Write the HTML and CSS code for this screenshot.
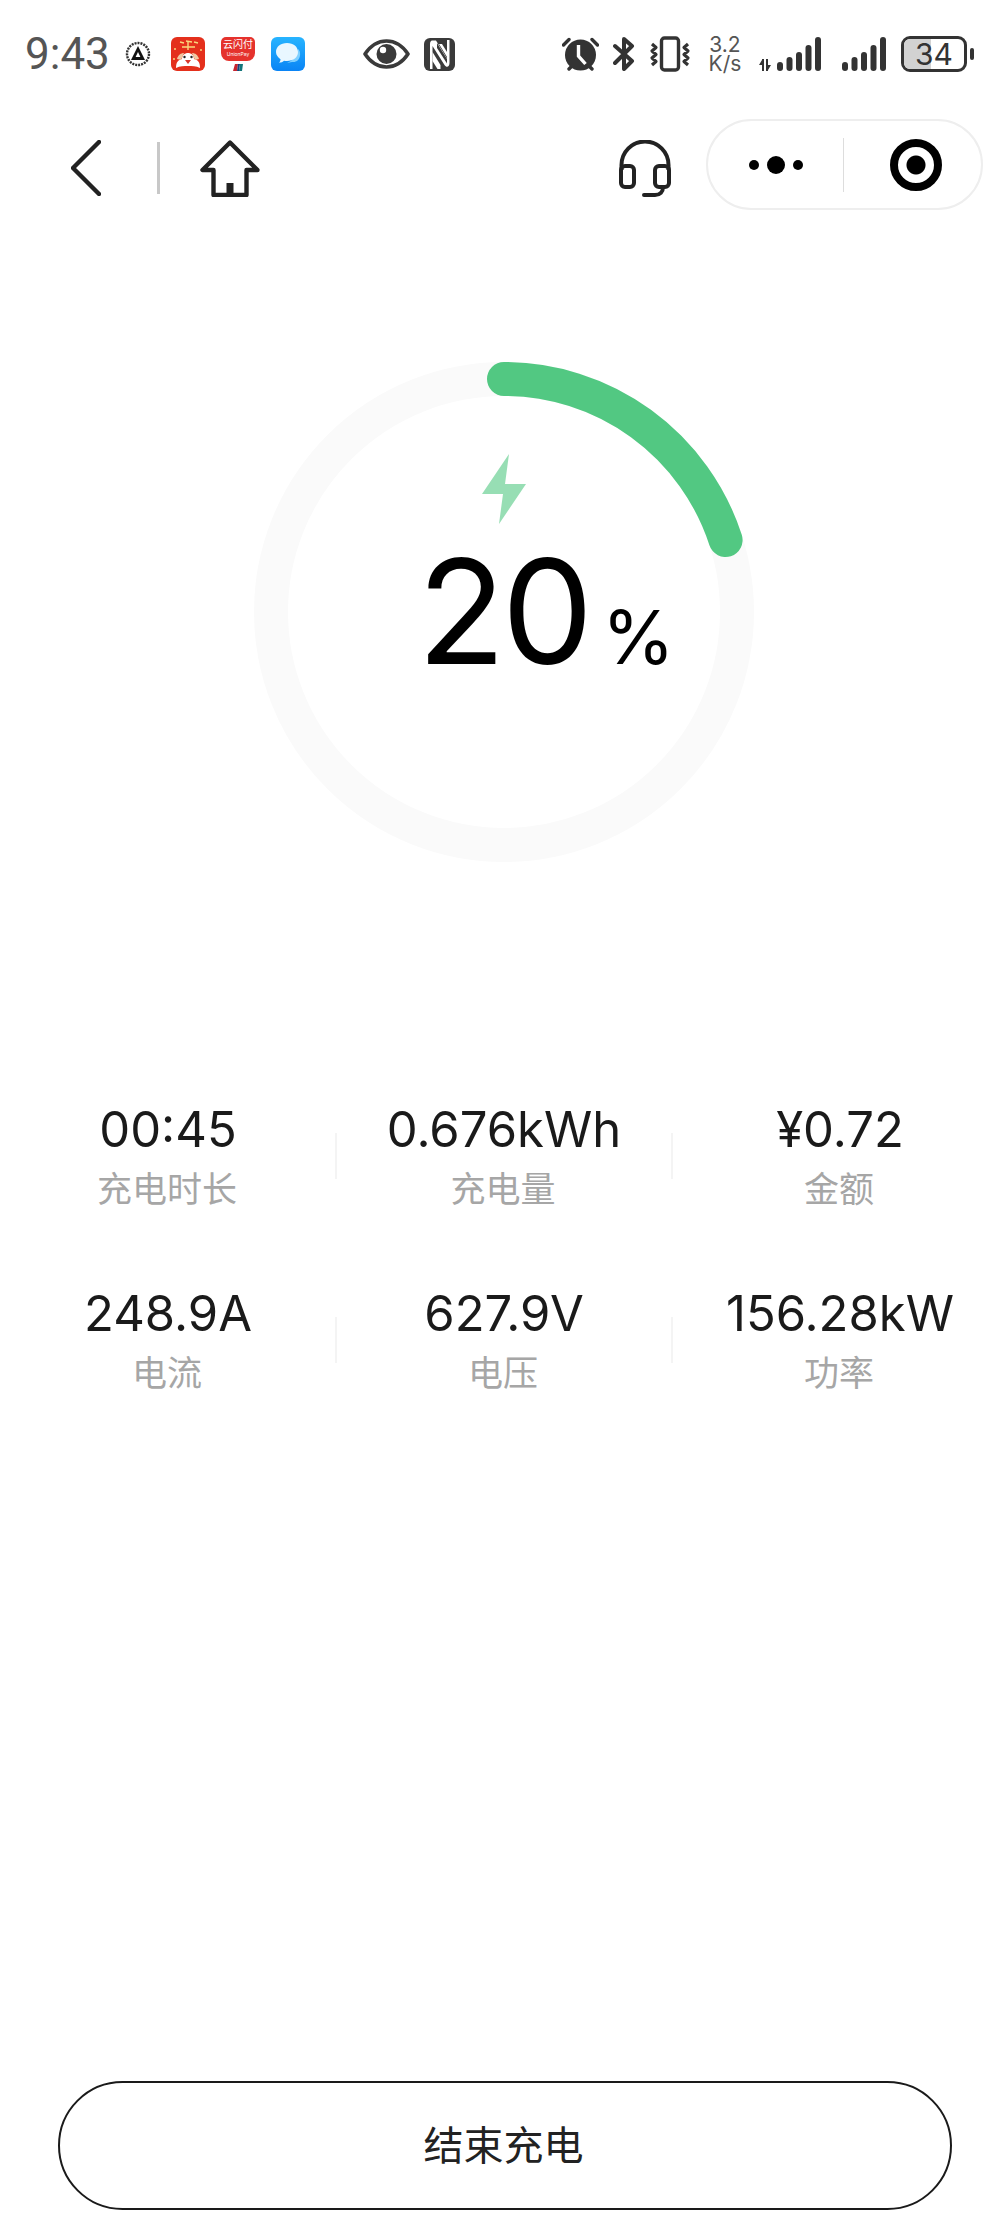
FILE: index.html
```html
<!DOCTYPE html>
<html lang="zh-CN">
<head>
    <meta charset="UTF-8">
    <meta name="viewport" content="width=device-width, initial-scale=1.0">
    <title>充电中</title>
    <link rel="stylesheet" href="styles.css">
</head>
<body>
    <div class="page">
        <!-- status bar -->
        <div class="status-bar">
            <span class="clock">9:43</span>
            <svg class="st-logo" width="26" height="26" viewBox="0 0 26 26">
                <circle cx="13" cy="13" r="11" fill="none" stroke="#333" stroke-width="2.4" stroke-dasharray="2 1"/>
                <circle cx="13" cy="13" r="7.5" fill="#fff"/>
                <path d="M13 5L20 19H6z" fill="#111"/>
                <path d="M13 11l2.4 5h-4.8z" fill="#fff"/>
            </svg>
            <svg class="st-app1" width="34" height="34" viewBox="0 0 34 34">
                <rect width="34" height="34" rx="6" fill="#e4301c"/>
                <path d="M9 5l4 1M15 4l6 1M23 5l4 1M11 10h13M17 4v9" stroke="#f9d77e" stroke-width="1.4" fill="none"/>
                <circle cx="4" cy="12" r="1" fill="#f9d77e"/><circle cx="30" cy="13" r="1" fill="#f9d77e"/><circle cx="3" cy="22" r="1" fill="#f9d77e"/>
                <path d="M5 31c0-6 2-8 6-9 0-4 3-6 6-6s6 2 6 6c4 1 6 3 6 9-4-2-8-2-12-2s-8 0-12 2z" fill="#fff"/>
                <path d="M6 22c1-4 4-6 7-6l-3 7zM28 22c-1-4-4-6-7-6l3 7z" fill="#f0c7a2"/>
                <circle cx="13.500" cy="20" r="1.200" fill="#222"/><circle cx="20.500" cy="20" r="1.200" fill="#222"/>
                <path d="M14 23h6l-3 4z" fill="#d9362a"/>
            </svg>
            <div class="st-app2">
                <div class="pay-card"><span class="pay-name">云闪付</span><span class="pay-en">UnionPay</span></div>
                <svg class="pay-flag" width="10" height="7" viewBox="0 0 10 7"><path d="M2 0h3L4 7H0z" fill="#c8242f"/><path d="M5 0h2L6 7H4z" fill="#1a3f7a"/><path d="M7 0h3L9 7H6z" fill="#12757a"/></svg>
            </div>
            <svg class="st-app3" width="34" height="34" viewBox="0 0 34 34">
                <defs><linearGradient id="chatBg" x1="0" y1="0" x2="0" y2="1"><stop offset="0" stop-color="#27b4ff"/><stop offset="1" stop-color="#0a84f5"/></linearGradient></defs>
                <rect width="34" height="34" rx="6" fill="url(#chatBg)"/>
                <path d="M27 12c3 2 3 9-1 12-2 1-3 1-5 1l-5 1c5-2 11-7 11-14z" fill="#7fd0ff"/>
                <path d="M16 6c6.500 0 11 3.800 11 9s-4.500 9-11 9c-1 0-2 0-3-.3-1 1.200-3 2-5 2 1-1 1.500-2.200 1.500-3.500C7 20.500 5 18 5 15c0-5.200 4.500-9 11-9z" fill="#e9f7ff"/>
            </svg>
            <svg class="st-eye" width="47" height="32" viewBox="0 0 47 32">
                <path d="M2 16C8 7 15 3 23.500 3S39 7 45 16c-6 9-13.500 13-21.500 13S8 25 2 16z" fill="none" stroke="#3a3a3a" stroke-width="3.600" stroke-linejoin="round"/>
                <circle cx="23.500" cy="16" r="10" fill="#3a3a3a"/>
                <circle cx="20" cy="12" r="3.200" fill="#fff"/>
            </svg>
            <svg class="st-nfc" width="31" height="33" viewBox="0 0 31 33">
                <rect width="31" height="33" rx="6" fill="#3a3a3a"/>
                <path d="M8 2.500h4l11 18V2h2.500v23c0 4-3 5-5 2L8.500 8v23H6V6c0-2 1-3.500 2-3.500z" fill="#fff"/>
                <path d="M13 5l10 16v4.500L13 10z" fill="#3a3a3a"/>
                <path d="M15 6h3l5 8v5zM8.500 14l8 13v4h-3l-5-8z" fill="#fff"/>
            </svg>

            <svg class="st-alarm" width="37" height="34" viewBox="0 0 37 34">
                <path d="M1.500 8L7 2.500M35.500 8L30 2.500M7 32l3-3M30 32l-3-3" stroke="#333" stroke-width="3.400" stroke-linecap="round"/>
                <circle cx="18.500" cy="18" r="15.500" fill="#333"/>
                <path d="M16.500 8v11l7 8" fill="none" stroke="#fff" stroke-width="3.400"/>
            </svg>
            <svg class="st-bt" width="22" height="34" viewBox="0 0 22 34">
                <path d="M2 9l17 15-8 8V2l8 7L2 26" fill="none" stroke="#333" stroke-width="4" stroke-linejoin="round" stroke-linecap="round"/>
            </svg>
            <svg class="st-vib" width="42" height="36" viewBox="0 0 42 36">
                <rect x="12.500" y="2" width="17" height="32" rx="3" fill="none" stroke="#333" stroke-width="3.400"/>
                <path d="M3 8l4 3.500-4 3.500 4 3.500-4 3.500 4 3.500-4 3.500M39 8l-4 3.500 4 3.500-4 3.500 4 3.500-4 3.500 4 3.500" fill="none" stroke="#333" stroke-width="3.200" stroke-linejoin="round"/>
            </svg>
            <div class="speed"><span>3.2</span><span>K/s</span></div>
            <svg class="st-sig1" width="62" height="34" viewBox="0 0 62 34">
                <path d="M0 28l3-5v-1h2v12H3v-6zM7 22h2v6h3l-3 5v1H7z" fill="#333"/>
                <rect x="18" y="25" width="6" height="9" rx="3" fill="#333"/>
                <rect x="27.500" y="20" width="6" height="14" rx="3" fill="#333"/>
                <rect x="37" y="15" width="6" height="19" rx="3" fill="#333"/>
                <rect x="46.500" y="8" width="6" height="26" rx="3" fill="#333"/>
                <rect x="56" y="0" width="6" height="34" rx="3" fill="#333"/>
            </svg>
            <svg class="st-sig2" width="44" height="34" viewBox="0 0 44 34">
                <rect x="0" y="25" width="6" height="9" rx="3" fill="#333"/>
                <rect x="9.500" y="20" width="6" height="14" rx="3" fill="#333"/>
                <rect x="19" y="15" width="6" height="19" rx="3" fill="#333"/>
                <rect x="28.500" y="8" width="6" height="26" rx="3" fill="#333"/>
                <rect x="38" y="0" width="6" height="34" rx="3" fill="#333"/>
            </svg>
            <div class="battery">
                <div class="battery-body">
                    <div class="battery-fill"></div>
                    <span class="battery-num">34</span>
                </div>
                <div class="battery-nub"></div>
            </div>
        </div>

        <!-- mini program nav -->
        <div class="nav">
            <svg class="nav-back" width="30" height="56" viewBox="0 0 30 56">
                <path d="M28 2L2 28l26 26" fill="none" stroke="#222" stroke-width="4.400" stroke-linecap="round" stroke-linejoin="round"/>
            </svg>
            <div class="nav-line"></div>
            <svg class="nav-home" width="60" height="57" viewBox="0 0 60 57">
                <path d="M30 2.500L2.500 30h11v25h33V30h11z" fill="none" stroke="#222" stroke-width="4.400" stroke-linejoin="round"/>
                <rect x="26.500" y="43" width="7" height="12" fill="#222"/>
            </svg>
            <svg class="nav-help" width="52" height="57" viewBox="0 0 52 57">
                <path d="M2.500 30V25a23.500 23.500 0 0 1 47 0v5" fill="none" stroke="#222" stroke-width="4"/>
                <rect x="2" y="26" width="13" height="21" rx="4" fill="none" stroke="#222" stroke-width="4"/>
                <rect x="36" y="26" width="14" height="21" rx="4" fill="none" stroke="#222" stroke-width="4"/>
                <path d="M44 47c0 5-3 8-8 8H25" fill="none" stroke="#222" stroke-width="4" stroke-linecap="round"/>
            </svg>
            <div class="capsule">
                <div class="capsule-more"><i class="dot"></i><i class="dot big"></i><i class="dot"></i></div>
                <div class="capsule-line"></div>
                <div class="capsule-close"><i class="target"></i></div>
            </div>
        </div>

        <!-- progress ring -->
        <div class="ring">
            <svg class="ring-svg" width="500" height="500" viewBox="0 0 500 500">
                <circle cx="250" cy="250" r="233" fill="none" stroke="#fafafa" stroke-width="34"/>
                <path d="M250 17A233 233 0 0 1 471.600 178" fill="none" stroke="#52c882" stroke-width="34" stroke-linecap="round"/>
            </svg>
            <div class="ring-inner">
                <svg class="bolt" width="44" height="70" viewBox="0 0 44 70">
                    <path d="M27 0L0 40h21l-4 30 27-40H23z" fill="#52c882" opacity="0.6"/>
                </svg>
                <div class="percent"><span class="percent-num">20</span><span class="percent-sign">%</span></div>
            </div>
        </div>

        <!-- charge data -->
        <div class="stats">
            <div class="stat"><div class="stat-value">00:45</div><div class="stat-label">充电时长</div></div>
            <div class="stat"><div class="stat-value">0.676kWh</div><div class="stat-label">充电量</div></div>
            <div class="stat"><div class="stat-value">¥0.72</div><div class="stat-label">金额</div></div>
            <div class="stat"><div class="stat-value">248.9A</div><div class="stat-label">电流</div></div>
            <div class="stat"><div class="stat-value">627.9V</div><div class="stat-label">电压</div></div>
            <div class="stat"><div class="stat-value">156.28kW</div><div class="stat-label">功率</div></div>
        </div>

        <button class="stop-btn">结束充电</button>
    </div>
</body>
</html>
```

FILE: styles.css
```css
* {
    margin: 0;
    padding: 0;
    box-sizing: border-box;
}

body {
    background: #fff;
    font-family: Inter, "Noto Sans CJK SC", sans-serif;
    color: #111;
}

.page {
    width: 1008px;
    height: 2232px;
    display: flex;
    flex-direction: column;
    overflow: hidden;
}

/* status bar */
.status-bar {
    height: 108px;
    padding-left: 25px;
    display: flex;
    align-items: center;
}

.clock {
    width: 84px;
    font-family: Roboto, sans-serif;
    font-size: 44px;
    line-height: 1;
    color: #555;
}

.st-logo { margin-left: 16px; }
.st-app1 { margin-left: 20px; }
.st-app3 { margin-left: 16px; }
.st-eye { margin-left: 58px; }
.st-nfc { margin-left: 14px; }
.st-alarm { margin-left: 107px; }
.st-bt { margin-left: 14px; }
.st-vib { margin-left: 14px; }
.st-sig1 { margin-left: 16px; }
.st-sig2 { margin-left: 21px; }

.st-app2 {
    width: 34px;
    height: 34px;
    margin-left: 16px;
    display: flex;
    flex-direction: column;
    align-items: center;
}

.pay-card {
    width: 34px;
    height: 24px;
    background: #e5322d;
    border-radius: 5px 5px 8px 8px;
    color: #fff;
    text-align: center;
    overflow: hidden;
}

.pay-name {
    display: block;
    font-size: 10px;
    line-height: 14px;
}

.pay-en {
    display: block;
    font-size: 5px;
    line-height: 6px;
}

.pay-flag { margin-top: 3px; }

.speed {
    width: 36px;
    margin-left: 16px;
    display: flex;
    flex-direction: column;
    align-items: center;
    font-family: Inter, sans-serif;
    font-size: 21px;
    line-height: 19px;
    color: #555;
}

.battery {
    margin-left: 15px;
    display: flex;
    align-items: center;
}

.battery-body {
    position: relative;
    width: 66px;
    height: 36px;
    border: 3px solid #333;
    border-radius: 9px;
    overflow: hidden;
    display: flex;
    align-items: center;
    justify-content: center;
}

.battery-fill {
    position: absolute;
    left: 0;
    top: 0;
    bottom: 0;
    width: 45%;
    background: #d2d2d2;
}

.battery-num {
    position: relative;
    font-family: Inter, sans-serif;
    font-size: 30px;
    line-height: 1;
    color: #333;
}

.battery-nub {
    width: 4px;
    height: 12px;
    margin-left: 3px;
    background: #333;
    border-radius: 2px;
}

/* nav */
.nav {
    height: 112px;
    padding-left: 71px;
    display: flex;
    align-items: center;
}

.nav svg,
.nav-line {
    margin-top: 8px;
}

.nav-line {
    width: 3px;
    height: 52px;
    margin-left: 56px;
    background: #c8c8c8;
}

.nav-home { margin-left: 40px; }
.nav-help { margin-left: 359px; }

.capsule {
    width: 277px;
    height: 91px;
    margin-left: 35px;
    margin-top: 1px;
    border: 2px solid #eee;
    border-radius: 46px;
    display: flex;
    align-items: center;
}

.capsule-more {
    width: 135px;
    display: flex;
    align-items: center;
    justify-content: center;
    gap: 8px;
}

.dot {
    width: 10px;
    height: 10px;
    border-radius: 50%;
    background: #000;
}

.dot.big {
    width: 18px;
    height: 18px;
}

.capsule-line {
    width: 1px;
    height: 54px;
    background: #ddd;
}

.capsule-close {
    flex: 1;
    display: flex;
    justify-content: center;
    padding-left: 6px;
}

.target {
    width: 52px;
    height: 52px;
    border: 8px solid #000;
    border-radius: 50%;
    background: radial-gradient(circle, #000 0 9px, #fff 10px);
}

/* ring */
.ring {
    position: relative;
    width: 500px;
    height: 500px;
    margin: 142px auto 0;
}

.ring-svg { display: block; }

.ring-inner {
    position: absolute;
    inset: 0;
    display: flex;
    flex-direction: column;
    align-items: center;
    padding-top: 92px;
}

.bolt {
    margin-left: -1px;
    display: block;
}

.percent {
    margin-top: 3px;
    margin-left: 84px;
    display: flex;
    align-items: baseline;
    gap: 13px;
    color: #000;
}

.percent-num {
    font-size: 145px;
    font-weight: 400;
    line-height: 170px;
    letter-spacing: -4px;
}

.percent-sign {
    font-size: 74px;
    font-weight: 400;
}

/* stats */
.stats {
    margin-top: 238px;
    display: grid;
    grid-template-columns: repeat(3, 1fr);
    row-gap: 44px;
}

.stat {
    position: relative;
    height: 140px;
    text-align: center;
}

.stat:not(:nth-child(3n))::after {
    content: "";
    position: absolute;
    right: -1px;
    top: 33px;
    width: 2px;
    height: 46px;
    background: #f4f4f4;
}

.stat-value {
    font-size: 49px;
    line-height: 60px;
    color: #1a1a1a;
}

.stat-label {
    margin-top: 5px;
    margin-right: 2px;
    font-size: 35px;
    line-height: 48px;
    color: #a6a6a6;
}

/* bottom button */
.stop-btn {
    width: 894px;
    height: 129px;
    margin: auto 0 22px 58px;
    padding: 0 3px 5px 0;
    background: #fff;
    border: 2px solid #1a1a1a;
    border-radius: 65px;
    font-family: "Noto Sans CJK SC", sans-serif;
    font-size: 40px;
    color: #222;
}
```
